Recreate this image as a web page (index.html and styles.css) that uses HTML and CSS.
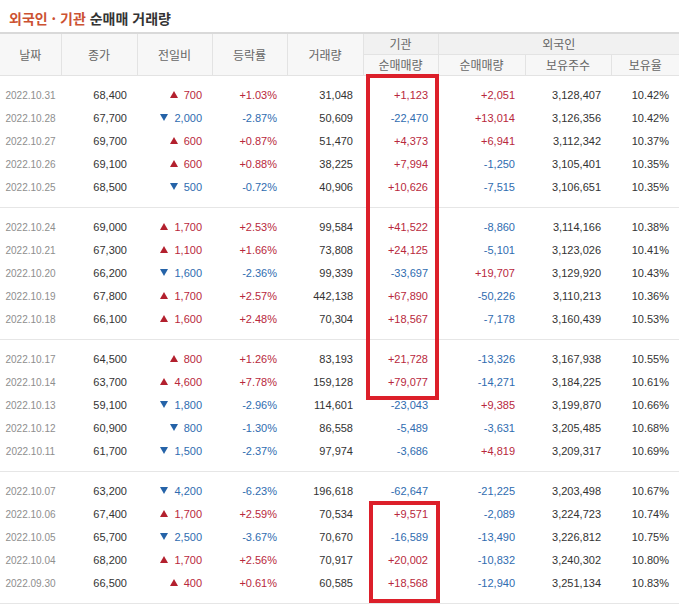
FILE: index.html
```html
<!DOCTYPE html>
<html lang="ko">
<head>
<meta charset="utf-8">
<title>외국인 · 기관 순매매 거래량</title>
<link rel="stylesheet" href="styles.css">
</head>
<body>
<div class="page">
  <h3 class="title"><span class="accent">외국인 · 기관</span> 순매매 거래량</h3>
  <table class="trade">
    <colgroup>
      <col class="c-date"><col class="c-close"><col class="c-diff"><col class="c-rate"><col class="c-vol">
      <col class="c-inst"><col class="c-frgn"><col class="c-hold"><col class="c-ratio">
    </colgroup>
    <thead>
      <tr class="h1">
        <th rowspan="2">날짜</th><th rowspan="2">종가</th><th rowspan="2">전일비</th><th rowspan="2">등락률</th><th rowspan="2">거래량</th>
        <th>기관</th><th colspan="3">외국인</th>
      </tr>
      <tr class="h2">
        <th>순매매량</th><th>순매매량</th><th>보유주수</th><th>보유율</th>
      </tr>
    </thead>
    <tbody>
      <tr><td class="date">2022.10.31</td><td>68,400</td><td class="up"><i class="tri-up"></i>700</td><td class="up">+1.03%</td><td>31,048</td><td class="up">+1,123</td><td class="up">+2,051</td><td>3,128,407</td><td>10.42%</td></tr>
      <tr><td class="date">2022.10.28</td><td>67,700</td><td class="dn"><i class="tri-dn"></i>2,000</td><td class="dn">-2.87%</td><td>50,609</td><td class="dn">-22,470</td><td class="up">+13,014</td><td>3,126,356</td><td>10.42%</td></tr>
      <tr><td class="date">2022.10.27</td><td>69,700</td><td class="up"><i class="tri-up"></i>600</td><td class="up">+0.87%</td><td>51,470</td><td class="up">+4,373</td><td class="up">+6,941</td><td>3,112,342</td><td>10.37%</td></tr>
      <tr><td class="date">2022.10.26</td><td>69,100</td><td class="up"><i class="tri-up"></i>600</td><td class="up">+0.88%</td><td>38,225</td><td class="up">+7,994</td><td class="dn">-1,250</td><td>3,105,401</td><td>10.35%</td></tr>
      <tr><td class="date">2022.10.25</td><td>68,500</td><td class="dn"><i class="tri-dn"></i>500</td><td class="dn">-0.72%</td><td>40,906</td><td class="up">+10,626</td><td class="dn">-7,515</td><td>3,106,651</td><td>10.35%</td></tr>
    </tbody>
    <tbody>
      <tr><td class="date">2022.10.24</td><td>69,000</td><td class="up"><i class="tri-up"></i>1,700</td><td class="up">+2.53%</td><td>99,584</td><td class="up">+41,522</td><td class="dn">-8,860</td><td>3,114,166</td><td>10.38%</td></tr>
      <tr><td class="date">2022.10.21</td><td>67,300</td><td class="up"><i class="tri-up"></i>1,100</td><td class="up">+1.66%</td><td>73,808</td><td class="up">+24,125</td><td class="dn">-5,101</td><td>3,123,026</td><td>10.41%</td></tr>
      <tr><td class="date">2022.10.20</td><td>66,200</td><td class="dn"><i class="tri-dn"></i>1,600</td><td class="dn">-2.36%</td><td>99,339</td><td class="dn">-33,697</td><td class="up">+19,707</td><td>3,129,920</td><td>10.43%</td></tr>
      <tr><td class="date">2022.10.19</td><td>67,800</td><td class="up"><i class="tri-up"></i>1,700</td><td class="up">+2.57%</td><td>442,138</td><td class="up">+67,890</td><td class="dn">-50,226</td><td>3,110,213</td><td>10.36%</td></tr>
      <tr><td class="date">2022.10.18</td><td>66,100</td><td class="up"><i class="tri-up"></i>1,600</td><td class="up">+2.48%</td><td>70,304</td><td class="up">+18,567</td><td class="dn">-7,178</td><td>3,160,439</td><td>10.53%</td></tr>
    </tbody>
    <tbody>
      <tr><td class="date">2022.10.17</td><td>64,500</td><td class="up"><i class="tri-up"></i>800</td><td class="up">+1.26%</td><td>83,193</td><td class="up">+21,728</td><td class="dn">-13,326</td><td>3,167,938</td><td>10.55%</td></tr>
      <tr><td class="date">2022.10.14</td><td>63,700</td><td class="up"><i class="tri-up"></i>4,600</td><td class="up">+7.78%</td><td>159,128</td><td class="up">+79,077</td><td class="dn">-14,271</td><td>3,184,225</td><td>10.61%</td></tr>
      <tr><td class="date">2022.10.13</td><td>59,100</td><td class="dn"><i class="tri-dn"></i>1,800</td><td class="dn">-2.96%</td><td>114,601</td><td class="dn">-23,043</td><td class="up">+9,385</td><td>3,199,870</td><td>10.66%</td></tr>
      <tr><td class="date">2022.10.12</td><td>60,900</td><td class="dn"><i class="tri-dn"></i>800</td><td class="dn">-1.30%</td><td>86,558</td><td class="dn">-5,489</td><td class="dn">-3,631</td><td>3,205,485</td><td>10.68%</td></tr>
      <tr><td class="date">2022.10.11</td><td>61,700</td><td class="dn"><i class="tri-dn"></i>1,500</td><td class="dn">-2.37%</td><td>97,974</td><td class="dn">-3,686</td><td class="up">+4,819</td><td>3,209,317</td><td>10.69%</td></tr>
    </tbody>
    <tbody>
      <tr><td class="date">2022.10.07</td><td>63,200</td><td class="dn"><i class="tri-dn"></i>4,200</td><td class="dn">-6.23%</td><td>196,618</td><td class="dn">-62,647</td><td class="dn">-21,225</td><td>3,203,498</td><td>10.67%</td></tr>
      <tr><td class="date">2022.10.06</td><td>67,400</td><td class="up"><i class="tri-up"></i>1,700</td><td class="up">+2.59%</td><td>70,534</td><td class="up">+9,571</td><td class="dn">-2,089</td><td>3,224,723</td><td>10.74%</td></tr>
      <tr><td class="date">2022.10.05</td><td>65,700</td><td class="dn"><i class="tri-dn"></i>2,500</td><td class="dn">-3.67%</td><td>70,670</td><td class="dn">-16,589</td><td class="dn">-13,490</td><td>3,226,812</td><td>10.75%</td></tr>
      <tr><td class="date">2022.10.04</td><td>68,200</td><td class="up"><i class="tri-up"></i>1,700</td><td class="up">+2.56%</td><td>70,917</td><td class="up">+20,002</td><td class="dn">-10,832</td><td>3,240,302</td><td>10.80%</td></tr>
      <tr><td class="date">2022.09.30</td><td>66,500</td><td class="up"><i class="tri-up"></i>400</td><td class="up">+0.61%</td><td>60,585</td><td class="up">+18,568</td><td class="dn">-12,940</td><td>3,251,134</td><td>10.83%</td></tr>
    </tbody>
  </table>
  <div class="mark mark-1"></div>
  <div class="mark mark-2"></div>
</div>
</body>
</html>
```

FILE: styles.css
```css
html, body {
  margin: 0;
  padding: 0;
  background: #fff;
}
body {
  font-family: "Liberation Sans", Arial, sans-serif;
  color: #333;
}
.page {
  position: relative;
  width: 679px;
}
.title {
  margin: 0;
  height: 32px;
  box-sizing: border-box;
  padding: 10px 0 0 9px;
  font-family: "Noto Sans CJK KR", sans-serif;
  font-size: 14px;
  line-height: 17px;
  font-weight: bold;
  color: #333;
}
.title .accent {
  color: #cc5232;
}
.trade {
  width: 679px;
  table-layout: fixed;
  border-collapse: collapse;
  border-spacing: 0;
  border-top: 2px solid #d9d9d9;
}
.c-date { width: 61px; }
.c-close { width: 76px; }
.c-diff { width: 75px; }
.c-rate { width: 75px; }
.c-vol { width: 76px; }
.c-inst { width: 75px; }
.c-frgn { width: 87px; }
.c-hold { width: 86px; }
.c-ratio { width: 68px; }

.trade th {
  font-family: "Noto Sans CJK KR", sans-serif;
  font-weight: normal;
  font-size: 12px;
  color: #666;
  background: #f4f4f4;
  padding: 0;
  text-align: center;
  border: 1px solid #e3e3e3;
  border-top: 0;
}
.trade th:first-child { border-left: 0; }
.trade tr.h1 th:last-child, .trade tr.h2 th:last-child { border-right: 0; }
.trade tr.h1 th { height: 20px; line-height: 20px; background: #f1f1f1; }
.trade tr.h2 th { height: 20px; line-height: 20px; background: #f7f7f7; }
.trade tr.h1 th[rowspan] { background: #f7f7f7; }
.trade thead { border-bottom: 1px solid #dcdcdc; }

.trade tbody {
  border-bottom: 1px solid #e6e6e6;
}
.trade td {
  padding: 0 10px 0 0;
  font-size: 11px;
  line-height: 23px;
  text-align: right;
  white-space: nowrap;
  color: #333;
}
.trade tbody tr:first-child td { padding-top: 8px; }
.trade tbody tr:last-child td { padding-bottom: 8px; }
.trade td.date {
  padding-right: 0;
  text-align: center;
  font-size: 10px;
  color: #8e8e8e;
}
.trade td.up { color: #b8283c; }
.trade td.dn { color: #2f6cb0; }

.tri-up, .tri-dn {
  display: inline-block;
  width: 0;
  height: 0;
  margin-right: 6px;
  vertical-align: 1px;
  border-left: 4px solid transparent;
  border-right: 4px solid transparent;
}
.tri-up { border-bottom: 7px solid #b3202e; }
.tri-dn { border-top: 7px solid #2563a8; }

.mark {
  position: absolute;
  box-sizing: border-box;
  border: 4px solid #dc1f2a;
}
.mark-1 { left: 366px; top: 74px; width: 73px; height: 326px; }
.mark-2 { left: 369px; top: 501px; width: 71px; height: 102px; }
```
